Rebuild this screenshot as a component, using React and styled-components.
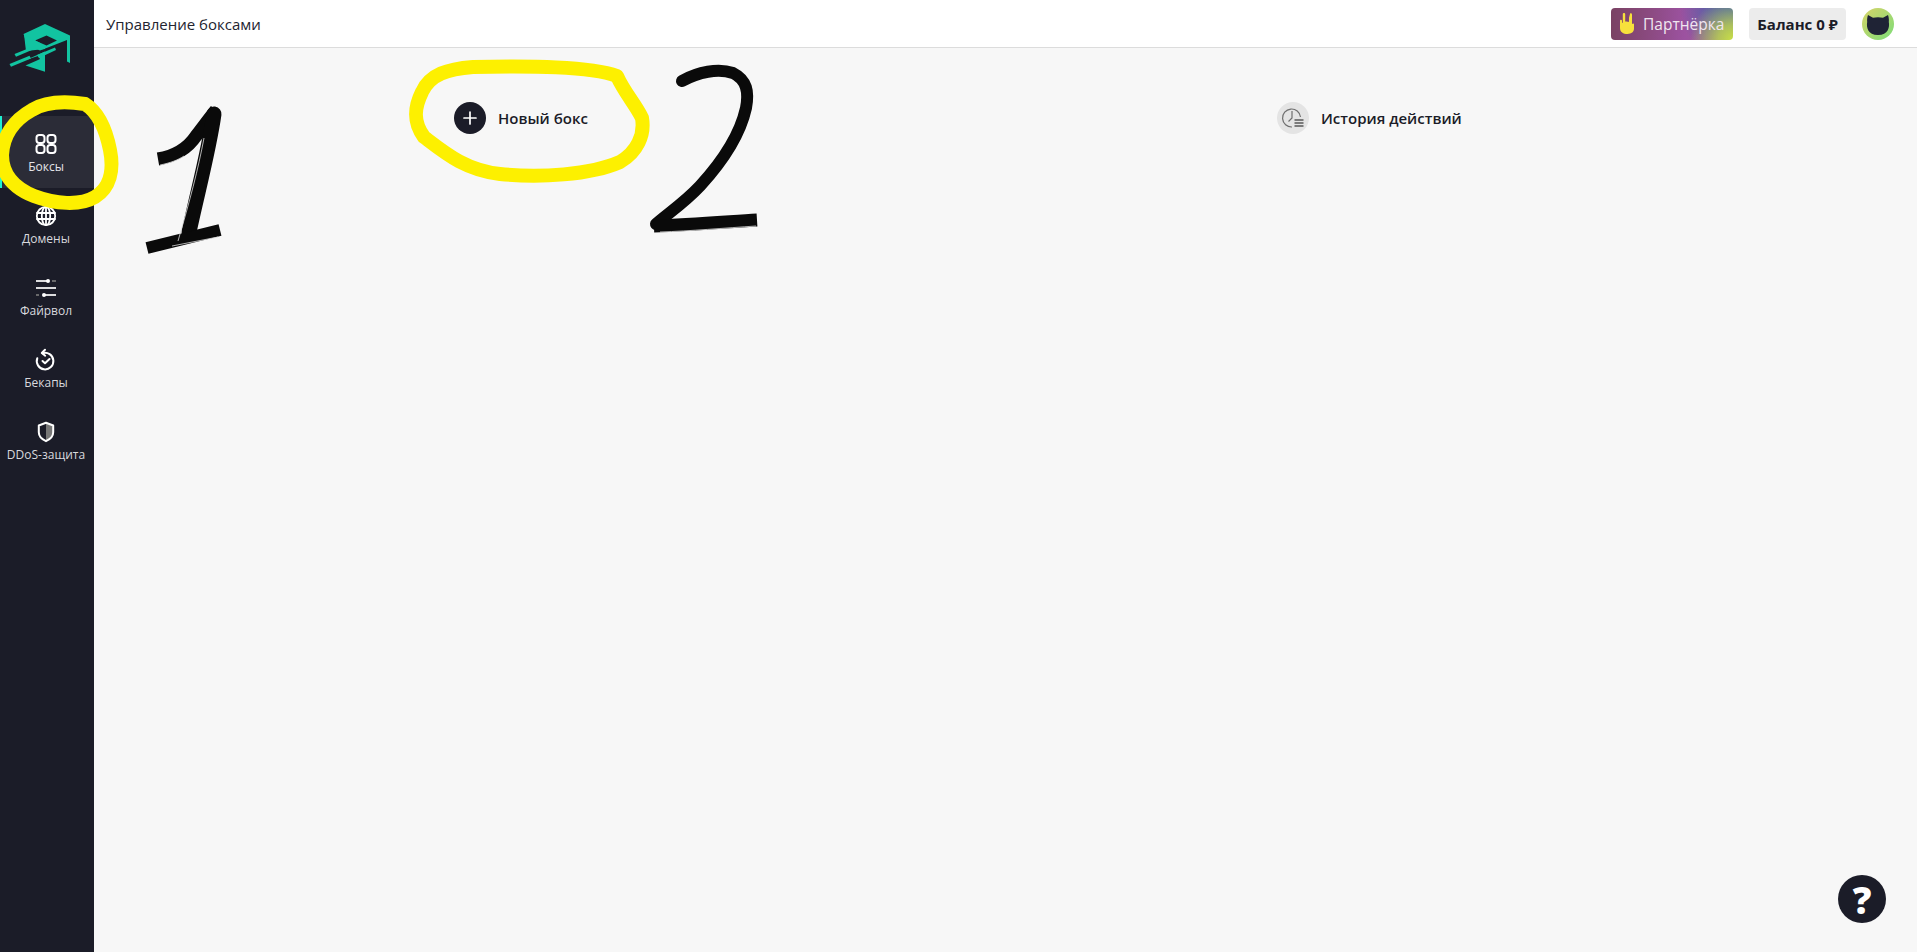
import React from "react";
import styled, { createGlobalStyle } from "styled-components";

const Global = createGlobalStyle`
  html, body, #root { margin: 0; padding: 0; height: 100%; }
  body { font-family: "Open Sans", "Noto Sans", sans-serif; background: #f7f7f7; color: #1b1c28; overflow: hidden; }
  * { box-sizing: border-box; }
`;

const Page = styled.div`
  position: relative;
  display: flex;
  width: 1917px;
  height: 952px;
  overflow: hidden;
`;
const Sidebar = styled.aside`
  width: 94px;
  flex: none;
  background: #1b1c28;
  display: flex;
  flex-direction: column;
`;
const LogoBox = styled.div`
  height: 116px;
  padding-top: 20px;
  display: flex;
  justify-content: flex-start;
  align-items: flex-start;
`;
const NavItem = styled.div`
  position: relative;
  height: 72px;
  padding: 16px 2px 0 0;
  display: flex;
  flex-direction: column;
  align-items: center;
  gap: 2px;
  color: #d9d9de;
  font-size: 12px;
  line-height: 18px;
  white-space: nowrap;
  background: ${p => (p.$active ? "#2b2c37" : "transparent")};
  ${p => p.$active && `
    color: #e4e4e8;
    &::before {
      content: "";
      position: absolute;
      left: 0; top: 0; bottom: 0;
      width: 2px;
      background: #1fefd0;
    }
  `}
`;
const NavIcon = styled.svg`
  width: 24px;
  height: 24px;
  flex: none;
  fill: none;
  stroke: #fff;
  stroke-width: 2;
  stroke-linecap: round;
  stroke-linejoin: round;
`;
const Main = styled.div`
  flex: 1;
  display: flex;
  flex-direction: column;
  min-width: 0;
`;
const Header = styled.header`
  height: 48px;
  flex: none;
  background: #fff;
  border-bottom: 1px solid #dcdcdc;
  display: flex;
  align-items: center;
  padding: 0 23px 0 12px;
`;
const Title = styled.div`
  font-size: 15px;
  line-height: 20px;
  color: #23242f;
  flex: 1;
`;
const PartnerButton = styled.div`
  width: 122px;
  height: 32px;
  border-radius: 4px;
  display: flex;
  align-items: center;
  gap: 8px;
  padding-left: 8px;
  color: #f0e6f0;
  font-size: 15.500px;
  white-space: nowrap;
  background:
    radial-gradient(circle at 100% 100%, #c8df45 0, rgba(200,223,69,.75) 12%, rgba(200,160,90,0) 34%),
    radial-gradient(circle at 100% 0, #3f5cb0 0, rgba(63,92,176,.7) 18%, rgba(63,92,176,0) 42%),
    linear-gradient(90deg, #7a4263 0, #8d4b84 35%, #9c52a0 60%, #9a6a90 100%);
`;
const BalanceButton = styled.div`
  width: 97px;
  height: 32px;
  margin-left: 16px;
  border-radius: 4px;
  background: #ececec;
  display: flex;
  align-items: center;
  justify-content: center;
  font-size: 15px;
  font-weight: 700;
  color: #1b1c28;
  white-space: nowrap;
`;
const Avatar = styled.svg`
  width: 32px;
  height: 32px;
  margin-left: 16px;
  flex: none;
`;
const Content = styled.main`
  flex: 1;
  display: grid;
  grid-template-columns: 823px 1fr;
  align-content: start;
  padding: 54px 0 0 360px;
`;
const ActionRow = styled.div`
  display: flex;
  align-items: center;
  gap: 12px;
  height: 32px;
  font-size: 15px;
  font-weight: 600;
  color: #1b1c28;
`;
const RoundIcon = styled.div`
  width: 32px;
  height: 32px;
  border-radius: 50%;
  flex: none;
  display: flex;
  align-items: center;
  justify-content: center;
  background: ${p => p.$bg};
`;
const HelpButton = styled.div`
  position: absolute;
  left: 1838px;
  top: 875px;
  width: 48px;
  height: 48px;
  border-radius: 50%;
  background: #1b1c28;
  color: #fff;
  display: flex;
  align-items: center;
  justify-content: center;
  font-size: 37px;
  font-weight: 800;
  line-height: 1;
`;
const Overlay = styled.svg`
  position: absolute;
  left: 0;
  top: 0;
  width: 1917px;
  height: 952px;
  pointer-events: none;
`;

const Logo = () => (
  <svg width="80" height="60" viewBox="0 0 80 60" style={{ display: "block" }}>
    <path
      fill="#12c4a1"
      fillRule="evenodd"
      d="M23.500 14 45 4 70 15.500V43L67 41.500V20L44 29 40 30.500 27 24ZM35 20.500 46.500 25.500 57 20.500 46.500 15.500Z"
    />
    <path fill="#12c4a1" d="M24 14.500 40 23 45 27V29L26 31Z" />
    <path fill="#12c4a1" d="M26 40 45 31.500V51.700L25.500 45.500 38 40 40 39 38 36Z" />
    <path fill="#12c4a1" d="M14.500 34 35 25.700 36.500 28 16 36.800Z" />
    <path fill="#12c4a1" d="M9.500 44 29.500 35.700 31 38.500 11 46.800Z" />
    <path fill="#12c4a1" d="M37 35 55 27.500 56 30 39 38Z" />
  </svg>
);

const BoxesIcon = () => (
  <NavIcon viewBox="0 0 24 24">
    <rect x="2.500" y="3" width="8" height="8" rx="2.700" />
    <rect x="13.500" y="3" width="8" height="8" rx="2.700" />
    <rect x="2.500" y="13" width="8" height="8" rx="2.700" />
    <rect x="13.500" y="13" width="8" height="8" rx="2.700" />
  </NavIcon>
);
const GlobeIcon = () => (
  <NavIcon viewBox="0 0 24 24" style={{ strokeWidth: 1.8 }}>
    <circle cx="12" cy="12" r="9.200" />
    <ellipse cx="12" cy="12" rx="4.200" ry="9.200" />
    <path d="M3 9h18M3 15h18M12 3v18" />
  </NavIcon>
);
const SlidersIcon = () => (
  <NavIcon viewBox="0 0 24 24" style={{ strokeLinecap: "butt", strokeWidth: 1.7 }}>
    <path d="M2 5h11" />
    <path d="M18 5h4" stroke="#777" />
    <circle cx="14" cy="5" r="2" fill="#fff" stroke="none" />
    <path d="M2 12h20" />
    <path d="M2 19h3" stroke="#777" />
    <path d="M9 19h13" />
    <circle cx="10" cy="19" r="2" fill="#fff" stroke="none" />
  </NavIcon>
);
const BackupIcon = () => (
  <NavIcon viewBox="0 0 24 24">
    <path d="M8.500 5.200a8.300 8.300 0 1 1-5.200 5" />
    <path d="M11 1.800 7.800 5l3.400 2.700" />
    <path d="M8.500 13l2.500 2.300 4.500-4.300" />
  </NavIcon>
);
const ShieldIcon = () => (
  <NavIcon viewBox="0 0 24 24">
    <path d="M12 3.500 19 6v6.500c0 4-3 6.600-7 8.300Z" fill="#777" stroke="none" />
    <path d="M12 2.800 19.200 5.500v6.800c0 4.300-3 7-7.200 8.900-4.200-1.900-7.200-4.600-7.200-8.900V5.500Z" />
  </NavIcon>
);
const RockHand = () => (
  <svg width="16" height="23" viewBox="0 0 16 23" style={{ flex: "none" }}>
    <path
      fill="#f7e13c"
      d="M1 8.500c0-1 1.800-1.300 2 0v2.200h.8V2c0-1.500 2.400-1.500 2.400 0v7.500L7.500 9.500l1 .2h.8l.7.200V6c0-0 1.100-5 1.700-5 1 0 1.300 1 1.300 2v9c.6-.6 2-1 2 .6v4c0 3.400-2.500 5.400-6.500 5.400-4.200 0-7.500-2-7.500-6Z"
    />
  </svg>
);
const Cat = () => (
  <Avatar viewBox="0 0 32 32">
    <defs>
      <linearGradient id="av" x1="0" y1="0" x2="1" y2="1">
        <stop offset="0" stopColor="#d8d468" />
        <stop offset="1" stopColor="#7cdc78" />
      </linearGradient>
    </defs>
    <circle cx="16" cy="16" r="16" fill="url(#av)" />
    <path fill="#1f2335" d="M6 7l5 2.800c3-.8 7-.8 10 0L26 7c1 3 1 5 .8 7 1 5-.5 13-10.800 13S4.200 19 5.200 14C5 12 5 10 6 7Z" />
  </Avatar>
);
const PlusIcon = () => (
  <svg width="14" height="14" viewBox="0 0 14 14">
    <path d="M7 1v12M1 7h12" stroke="#fff" strokeWidth="1.700" strokeLinecap="round" />
  </svg>
);
const HistoryIcon = () => (
  <svg width="24" height="24" viewBox="0 0 24 24" fill="none">
    <path d="M19.500 11A9 9 0 1 0 11 21" stroke="#6f6f6f" strokeWidth="1.200" />
    <path d="M11 5v7l-3.500 3.500" stroke="#6f6f6f" strokeWidth="1.200" />
    <path d="M13.500 14h9M13.500 17h9M13.500 20h9" stroke="#7b7b7b" strokeWidth="1.800" />
  </svg>
);

const Annotations = () => (
  <Overlay viewBox="0 0 1917 952" fill="none">
    <g stroke="#fdf000" strokeLinecap="round" strokeLinejoin="round">
      <path
        strokeWidth="14"
        d="M85 104C65 101 45 102 32 110 14 120 3 136 2 155 2 175 14 188 34 196 55 204 80 206 95 197 110 188 114 170 110 150 106 130 98 112 85 104Z"
      />
      <path
        strokeWidth="14"
        d="M617 76C590 66 530 66 473 67 448 69 430 74 422 92 414 108 413 122 424 137 445 153 465 170 500 174 540 178 590 175 620 162 637 152 645 135 642 118 636 105 624 92 617 76Z"
      />
    </g>
    <g stroke="#0a0a0a" strokeLinejoin="round">
      <path strokeWidth="13" strokeLinecap="butt" d="M158 159C175 156 188 148 196 136 203 127 208 120 216 110" />
      <path strokeWidth="15" strokeLinecap="round" d="M214 114C209 150 198 190 189 232" />
      <path strokeWidth="12" strokeLinecap="butt" d="M147 248 220 230" />
      <path strokeWidth="12" strokeLinecap="round" d="M682 81C698 72 718 68 733 73 747 80 749 92 746 108 740 135 722 162 700 186 685 202 670 212 656 224" />
      <path strokeWidth="13" strokeLinecap="butt" d="M654 226C690 225 725 222 757 220" />
    </g>
    <g stroke="#dcdcdc" strokeWidth="0.800">
      <path d="M204 138C198 170 190 200 178 241" />
      <path d="M160 165C170 163 178 160 184 156" />
      <path d="M172 246 218 237" />
      <path d="M660 232C690 231 725 228 756 226" />
    </g>
  </Overlay>
);

export default function App() {
  return (
    <Page>
      <Global />
      <Sidebar>
        <LogoBox><Logo /></LogoBox>
        <NavItem $active><BoxesIcon />Боксы</NavItem>
        <NavItem><GlobeIcon />Домены</NavItem>
        <NavItem><SlidersIcon />Файрвол</NavItem>
        <NavItem><BackupIcon />Бекапы</NavItem>
        <NavItem><ShieldIcon />DDoS-защита</NavItem>
      </Sidebar>
      <Main>
        <Header>
          <Title>Управление боксами</Title>
          <PartnerButton><RockHand />Партнёрка</PartnerButton>
          <BalanceButton>Баланс 0 ₽</BalanceButton>
          <Cat />
        </Header>
        <Content>
          <ActionRow>
            <RoundIcon $bg="#1b1c28"><PlusIcon /></RoundIcon>
            Новый бокс
          </ActionRow>
          <ActionRow>
            <RoundIcon $bg="#e4e4e4"><HistoryIcon /></RoundIcon>
            История действий
          </ActionRow>
        </Content>
      </Main>
      <HelpButton>?</HelpButton>
      <Annotations />
    </Page>
  );
}
